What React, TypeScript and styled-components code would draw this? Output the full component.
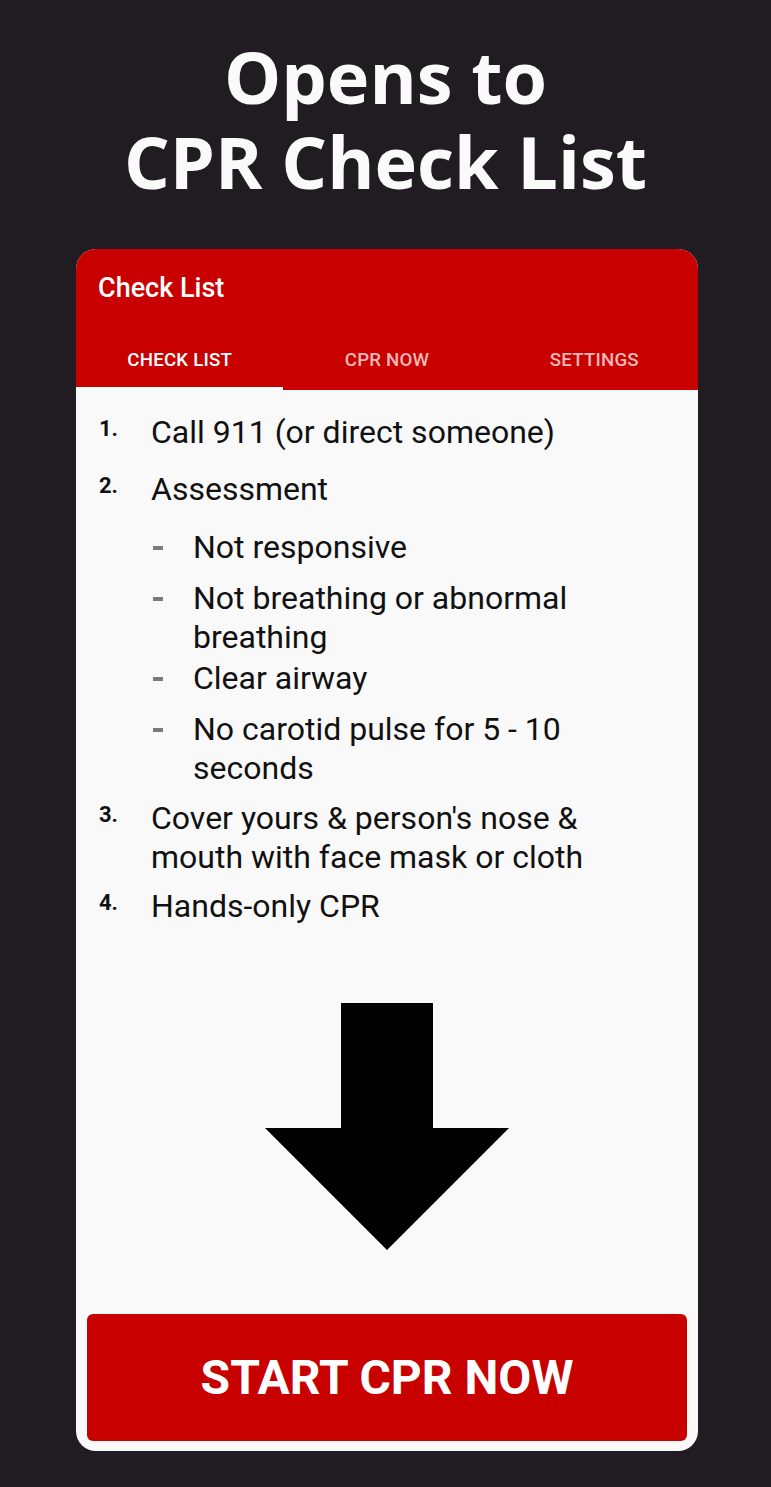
import React from "react";
import styled, { createGlobalStyle } from "styled-components";

const Global = createGlobalStyle`
  html, body { margin: 0; padding: 0; background: #201c22; }
  body { width: 771px; min-height: 1487px; font-family: Roboto, "Liberation Sans", sans-serif; }
  * { box-sizing: border-box; }
`;

const Page = styled.div`
  width: 771px;
  height: 1487px;
  background: #201c22;
  padding-top: 34px;
  overflow: hidden;
`;

const Title = styled.h1`
  margin: 0;
  font-family: "Open Sans", sans-serif;
  font-weight: 700;
  font-size: 72px;
  line-height: 85px;
  color: #fafafa;
  text-align: center;
  letter-spacing: 0;
`;

const Card = styled.div`
  margin: 45px 0 0 76px;
  width: 622px;
  border-radius: 20px;
  background: #f9f9f9;
  overflow: hidden;
  display: flex;
  flex-direction: column;
`;

const Header = styled.div`
  background: #c80000;
  display: flex;
  flex-direction: column;
`;

const HeaderTitle = styled.div`
  height: 81px;
  padding: 22px 0 0 22px;
  color: #ffffff;
  font-weight: 500;
  font-size: 27px;
  line-height: 34px;
`;

const Tabs = styled.div`
  display: flex;
  height: 60px;
`;

const Tab = styled.div<{ $active?: boolean }>`
  flex: 1;
  display: flex;
  align-items: center;
  justify-content: center;
  padding-top: ${(p) => (p.$active ? "3px" : "0")};
  border-bottom: ${(p) => (p.$active ? "3px solid #ffffff" : "none")};
  color: ${(p) => (p.$active ? "#ffffff" : "#f3b8b8")};
  font-weight: 500;
  font-size: 18.7px;
  letter-spacing: 0.01em;
  text-transform: uppercase;
`;

const Content = styled.div`
  display: flex;
  flex-direction: column;
  padding: 23px 11px 10px 11px;
`;

const List = styled.ol`
  list-style: none;
  margin: 0;
  padding: 0 50px 0 12px;
`;

const Item = styled.li<{ $space?: number }>`
  display: flex;
  margin-top: ${(p) => p.$space ?? 0}px;
`;

const Num = styled.span`
  flex: 0 0 52px;
  padding-top: 5px;
  font-weight: 700;
  font-size: 22px;
  line-height: 22px;
  color: #111111;
`;

const Body = styled.div`
  flex: 1;
  display: flex;
  flex-direction: column;
`;

const Text = styled.span`
  font-size: 32px;
  line-height: 39px;
  color: #111111;
`;

const SubList = styled.ul`
  list-style: none;
  margin: 19px 0 0 0;
  padding: 0;
`;

const SubItem = styled.li<{ $space?: number }>`
  display: flex;
  margin-top: ${(p) => p.$space ?? 0}px;
`;

const Dash = styled.span`
  flex: 0 0 42px;
  padding: 18px 0 0 2px;
  &::before {
    content: "";
    display: block;
    width: 10px;
    height: 4px;
    background: #7a7a7a;
  }
`;

const ArrowWrap = styled.div`
  display: flex;
  justify-content: center;
  margin-top: 77px;
`;

const StartButton = styled.button`
  margin-top: 64px;
  height: 127px;
  width: 100%;
  border: none;
  border-radius: 6px;
  background: #c80000;
  color: #ffffff;
  font-family: Roboto, "Liberation Sans", sans-serif;
  font-weight: 700;
  font-size: 48px;
  letter-spacing: 0;
  display: flex;
  align-items: center;
  justify-content: center;
`;

const DownArrow = () => (
  <svg width="244" height="247" viewBox="0 0 244 247">
    <polygon points="76,0 168,0 168,125 244,125 122,247 0,125 76,125" fill="#000000" />
  </svg>
);

const subItems: { text: string; space: number }[] = [
  { text: "Not responsive", space: 0 },
  { text: "Not breathing or abnormal breathing", space: 12 },
  { text: "Clear airway", space: 2 },
  { text: "No carotid pulse for 5 - 10 seconds", space: 12 },
];

export default function App() {
  return (
    <Page>
      <Global />
      <Title>
        Opens to
        <br />
        CPR Check List
      </Title>
      <Card>
        <Header>
          <HeaderTitle>Check List</HeaderTitle>
          <Tabs>
            <Tab $active>Check List</Tab>
            <Tab>CPR Now</Tab>
            <Tab>Settings</Tab>
          </Tabs>
        </Header>
        <Content>
          <List>
            <Item>
              <Num>1.</Num>
              <Body>
                <Text>Call 911 (or direct someone)</Text>
              </Body>
            </Item>
            <Item $space={18}>
              <Num>2.</Num>
              <Body>
                <Text>Assessment</Text>
                <SubList>
                  {subItems.map((s) => (
                    <SubItem key={s.text} $space={s.space}>
                      <Dash />
                      <Text>{s.text}</Text>
                    </SubItem>
                  ))}
                </SubList>
              </Body>
            </Item>
            <Item $space={11}>
              <Num>3.</Num>
              <Body>
                <Text>Cover yours &amp; person's nose &amp; mouth with face mask or cloth</Text>
              </Body>
            </Item>
            <Item $space={10}>
              <Num>4.</Num>
              <Body>
                <Text>Hands-only CPR</Text>
              </Body>
            </Item>
          </List>
          <ArrowWrap>
            <DownArrow />
          </ArrowWrap>
          <StartButton>START CPR NOW</StartButton>
        </Content>
      </Card>
    </Page>
  );
}
